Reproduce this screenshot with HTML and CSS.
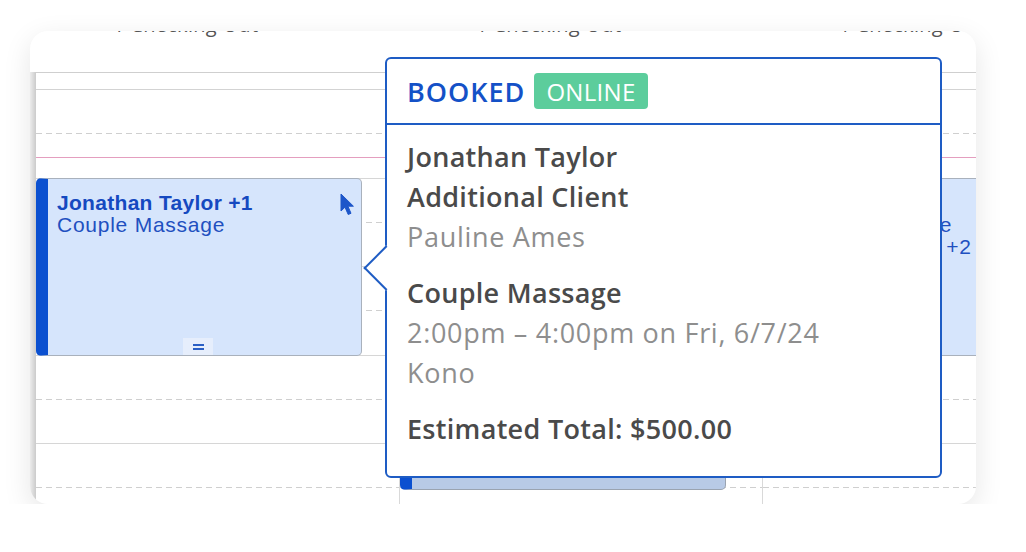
FILE: index.html
```html
<!DOCTYPE html>
<html lang="en">
  <head>
    <meta charset="UTF-8" />
    <meta name="viewport" content="width=device-width, initial-scale=1.0" />
    <title>Calendar - Appointment Details</title>
    <link rel="stylesheet" href="styles.css">
  </head>
  <body>
    <div class="frame">
      <div class="cal">
        <div class="gutter"></div>

        <div class="col">
          <div class="col-head"><span>1 Checking Out</span></div>
          <div class="all-day"></div>
          <div class="slots">
            <div class="slot half"></div><div class="slot hour"></div>
            <div class="slot half"></div><div class="slot hour"></div>
            <div class="slot half"></div><div class="slot hour"></div>
            <div class="slot half"></div><div class="slot hour"></div>
            <div class="slot half"></div><div class="slot hour"></div>
            <div class="appt appt-main">
              <div class="appt-name">Jonathan Taylor +1</div>
              <div class="appt-service">Couple Massage</div>
              <svg class="pointer" width="16" height="23" viewBox="0 0 16 23">
                <path d="M1 1 L1 18 L5 14.2 L8.2 21.5 L11 20.3 L7.9 13.2 L13.4 13.2 Z" fill="#1d56c9" stroke="#1d56c9" stroke-width="1" stroke-linejoin="round"/>
              </svg>
              <div class="handle"><span></span></div>
            </div>
          </div>
        </div>

        <div class="col">
          <div class="col-head"><span>1 Checking Out</span></div>
          <div class="all-day"></div>
          <div class="slots">
            <div class="slot half"></div><div class="slot hour"></div>
            <div class="slot half"></div><div class="slot hour"></div>
            <div class="slot half"></div><div class="slot hour"></div>
            <div class="slot half"></div><div class="slot hour"></div>
            <div class="slot half"></div><div class="slot hour"></div>
            <div class="appt appt-dim">
              <div class="appt-name">Maria Lopez</div>
            </div>
          </div>
        </div>

        <div class="col">
          <div class="col-head"><span>1 Checking Out</span></div>
          <div class="all-day"></div>
          <div class="slots">
            <div class="slot half"></div><div class="slot hour"></div>
            <div class="slot half"></div><div class="slot hour"></div>
            <div class="slot half"></div><div class="slot hour"></div>
            <div class="slot half"></div><div class="slot hour"></div>
            <div class="slot half"></div><div class="slot hour"></div>
            <div class="appt appt-side">
              <div class="appt-name">Emma Collins</div>
              <div class="appt-service">Couple Massage</div>
              <div class="appt-service">Group Package +2</div>
            </div>
          </div>
        </div>
      </div>

      <div class="now-line"></div>

      <div class="popover">
        <div class="pop-head">
          <span class="booked">BOOKED</span>
          <span class="badge">ONLINE</span>
        </div>
        <div class="pop-body">
          <div class="group">
            <div class="strong">Jonathan Taylor</div>
            <div class="strong">Additional Client</div>
            <div class="muted">Pauline Ames</div>
          </div>
          <div class="group">
            <div class="strong">Couple Massage</div>
            <div class="muted">2:00pm &ndash; 4:00pm on Fri, 6/7/24</div>
            <div class="muted">Kono</div>
          </div>
          <div class="group">
            <div class="strong">Estimated Total: $500.00</div>
          </div>
        </div>
        <div class="arrow"></div>
      </div>
    </div>
  </body>
</html>
```

FILE: styles.css
```css
body {
  margin: 0;
  background-color: #fff;
  font-family: "Liberation Sans", Arial, sans-serif;
}
.frame {
  position: relative;
  width: 946px;
  height: 473px;
  margin: 31px 0 0 30px;
  border-radius: 18px;
  overflow: hidden;
  background-color: #fff;
  box-shadow: 0 8px 28px rgba(0, 0, 0, 0.1);
}
.cal {
  display: grid;
  grid-template-columns: 6px 363px 363px 363px;
}
.gutter {
  margin-top: 41px;
  background: linear-gradient(to right, #ececec, #cbcbcb);
}
.col + .col .all-day,
.col + .col .slots {
  border-left: 1px solid #d9d9d9;
}
.col-head {
  display: flow-root;
  height: 41px;
  padding-left: 77px;
  font-family: "Open Sans", sans-serif;
  font-size: 20px;
  letter-spacing: 0.3px;
  color: #555;
}
.col-head span {
  display: block;
  margin-top: -17px;
  line-height: 22px;
}
.all-day {
  height: 18px;
  box-sizing: border-box;
  border-top: 1px solid #cfcfcf;
  border-bottom: 1px solid #d3d3d3;
}
.slots {
  position: relative;
}
.slot {
  height: 44.25px;
  box-sizing: border-box;
}
.slot.half {
  background: linear-gradient(to right, #cfcfcf 6px, transparent 6px) left bottom / 10px 1px repeat-x;
}
.slot.hour {
  border-bottom: 1px solid #d6d6d6;
}

/* appointments */
.appt {
  position: absolute;
  left: 0;
  width: 326px;
  box-sizing: border-box;
  padding: 13px 9px 0;
  background-color: #d6e5fc;
  border: 1px solid #a9b1bc;
  border-left: 12px solid #0b50d0;
  border-radius: 5px;
  color: #1f50c0;
  font-size: 21px;
  line-height: 22px;
}
.appt-name {
  font-weight: bold;
  letter-spacing: 0.3px;
  color: #1549c0;
}
.appt-service {
  letter-spacing: 0.75px;
}
.appt-main {
  top: 88px;
  height: 178px;
}
.appt-dim {
  top: 311px;
  height: 89px;
  background-color: #b8cae6;
  border-color: #9aa3b0;
  border-left-color: #0b50d0;
}
.appt-side {
  top: 88px;
  height: 178px;
}
.pointer {
  position: absolute;
  top: 14px;
  right: 5px;
}
.handle {
  position: absolute;
  left: 135px;
  bottom: 0;
  width: 30px;
  height: 17px;
  background-color: #e6eefc;
  display: flex;
  align-items: center;
  justify-content: center;
}
.handle span {
  width: 11px;
  height: 2px;
  border-top: 2px solid #2a5fc5;
  border-bottom: 2px solid #2a5fc5;
}
.now-line {
  position: absolute;
  left: 6px;
  right: 0;
  top: 126px;
  height: 1px;
  background-color: #e49ebf;
}

/* popover */
.popover {
  position: absolute;
  left: 355px;
  top: 26px;
  width: 557px;
  height: 421px;
  box-sizing: border-box;
  background-color: #fff;
  border: 2px solid #1e5cc4;
  border-radius: 6px;
  font-family: "Open Sans", sans-serif;
}
.pop-head {
  height: 64px;
  display: flex;
  align-items: center;
  gap: 9px;
  padding-left: 20px;
  border-bottom: 2px solid #1e5cc4;
}
.booked {
  font-size: 27px;
  font-weight: 600;
  letter-spacing: 1px;
  color: #1451c7;
}
.badge {
  height: 36px;
  padding: 0 12px;
  display: flex;
  align-items: center;
  background-color: #5ccd9c;
  border-radius: 4px;
  color: #fff;
  font-size: 24px;
  letter-spacing: 0.3px;
}
.pop-body {
  padding: 12px 20px 0;
  font-size: 27px;
  line-height: 40px;
  letter-spacing: 0.7px;
}
.group + .group {
  margin-top: 16px;
}
.strong {
  font-weight: 600;
  letter-spacing: 0.3px;
  color: #4a4a4a;
}
.muted {
  color: #8e8e8e;
}
.arrow {
  position: absolute;
  left: -17px;
  top: 193px;
  width: 32px;
  height: 32px;
  box-sizing: border-box;
  background-color: #fff;
  border-left: 2px solid #1e5cc4;
  border-bottom: 2px solid #1e5cc4;
  transform: rotate(45deg);
}
```
